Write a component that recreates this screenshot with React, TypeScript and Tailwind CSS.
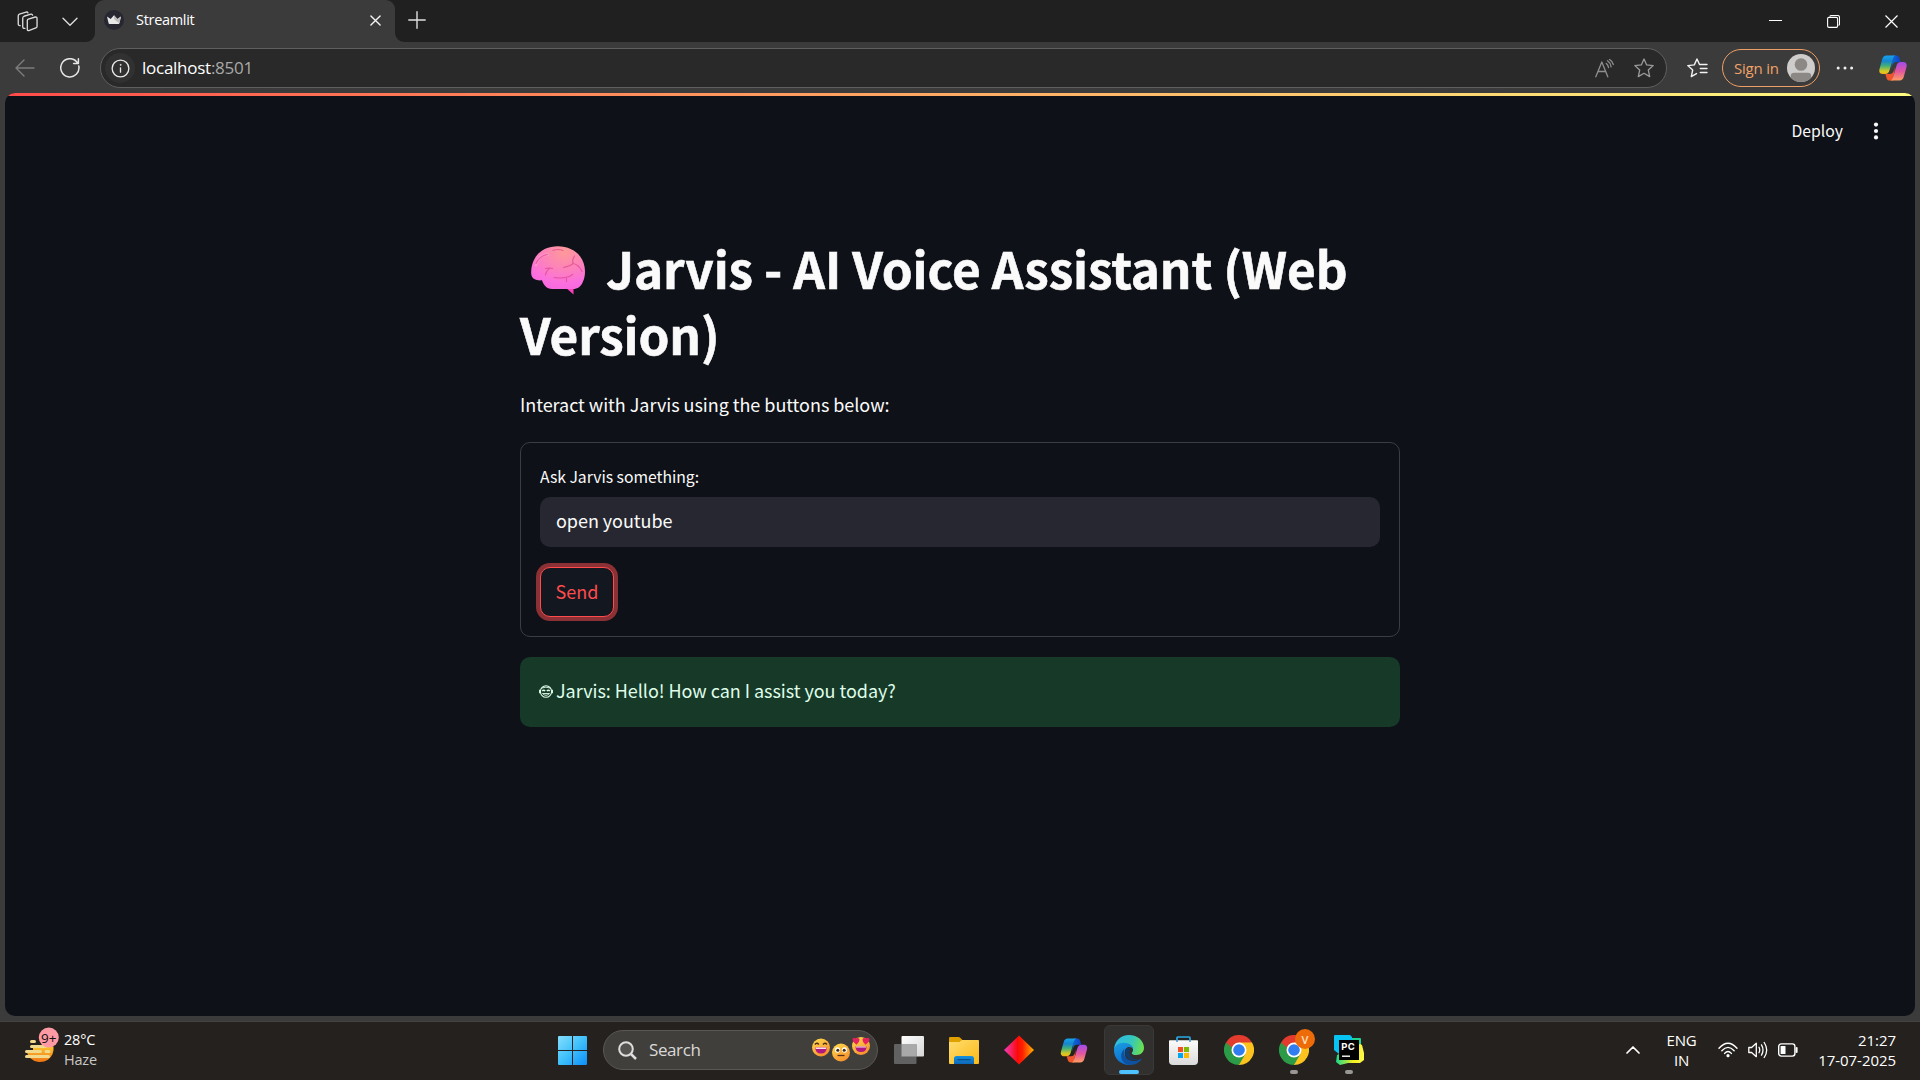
import React from "react";

function CopilotLogo({ id, className }: { id: string; className: string }) {
  return (
    <svg viewBox="0 0 28 26" className={className}>
      <defs>
        <linearGradient id={id + "a"} x1="0" y1="0" x2="0" y2="1">
          <stop offset="0" stopColor="#16a4ee" />
          <stop offset=".3" stopColor="#1685cf" />
          <stop offset=".55" stopColor="#3fae7c" />
          <stop offset=".85" stopColor="#d5cb20" />
          <stop offset="1" stopColor="#f6b21b" />
        </linearGradient>
        <linearGradient id={id + "b"} x1="0" y1="0" x2="0" y2="1">
          <stop offset="0" stopColor="#a14bea" />
          <stop offset=".5" stopColor="#e2569f" />
          <stop offset="1" stopColor="#ff9d62" />
        </linearGradient>
        <linearGradient id={id + "c"} x1="0" y1="0" x2="1" y2="0">
          <stop offset="0" stopColor="#0c6fd8" />
          <stop offset="1" stopColor="#123fc4" />
        </linearGradient>
      </defs>
      <path d="M14 .5h3.200c2 0 2.800 1 3.300 2.600L21.600 7H17c-2 0-3.200 1.300-3.800 3.200L12 14z" fill={`url(#${id}c)`} />
      <path d="M14 25.500h-3.200c-2 0-2.800-1-3.300-2.600L6.400 19H11c2 0 3.200-1.300 3.800-3.200L16 12z" fill="#f0562b" />
      <path d="M7.500.5H17c-1.500 0-2.300 1-2.900 2.700L10.600 15c-.8 2.600-2 4-4.300 4H4c-3 0-4.300-1.800-3.500-5L3.200 4.300C4 1.700 5.200.5 7.500.5z" fill={`url(#${id}a)`} />
      <path d="M20.500 25.500H11c1.500 0 2.300-1 2.900-2.700L17.400 11c.8-2.600 2-4 4.300-4H24c3 0 4.300 1.800 3.500 5l-2.700 9.700c-.8 2.600-2 3.800-4.300 3.800z" fill={`url(#${id}b)`} />
    </svg>
  );
}

function ChromeLogo() {
  return (
    <svg viewBox="0 0 48 48" className="size-[30px]">
      <path d="M24 24 L3.200 12 A24 24 0 0 1 44.800 12 Z" fill="#e33b2e" />
      <path d="M24 24 L44.800 12 A24 24 0 0 1 24 48 Z" fill="#fcc31e" />
      <path d="M24 24 L24 48 A24 24 0 0 1 3.200 12 Z" fill="#2c9b48" />
      <path d="M24 12h20.800L34 24z" fill="#fcc31e" />
      <path d="M3.200 12 13.600 30 24 24 24 12z" fill="#e33b2e" />
      <path d="M3.200 12 13.600 30 20 26z" fill="#2c9b48" />
      <path d="M34.400 30 24 48l-2-14z" fill="#2c9b48" />
      <circle cx="24" cy="24" r="12" fill="#fff" />
      <circle cx="24" cy="24" r="9.300" fill="#2f7df0" />
    </svg>
  );
}

function TabStrip() {
  return (
    <div className="flex h-[42px] bg-[#202020]">
      <div className="flex w-[95px] items-start">
        <svg viewBox="0 0 22 22" className="ml-[17px] mt-[11px] size-[21px]" fill="none" stroke="#dcdcdc" strokeWidth="1.400" strokeLinejoin="round" strokeLinecap="round">
          <path d="M11.800 8.400 19.200 6.300Q21 6 21 7.700V16Q21 17.400 19.800 17.800L13 20.300Q10.800 21 10.800 19V10Q10.800 8.800 11.800 8.400z" />
          <path d="M8.300 18.200Q6 18.500 6 16.500V7.500Q6 6 7.300 5.500L14.500 3.300Q16 3 16.300 4.300" />
          <path d="M3.300 15.300Q1.300 15.500 1.300 13.700V5Q1.300 3.800 2.500 3.300L9.500 1.200Q11 .8 11.500 2" />
        </svg>
        <svg viewBox="0 0 16 10" className="ml-6 mt-[17px] h-[10px] w-4" fill="none" stroke="#dcdcdc" strokeWidth="1.400" strokeLinecap="round" strokeLinejoin="round">
          <path d="M1 1.200l7 7 7-7" />
        </svg>
      </div>
      <div className="relative flex w-[300px] items-start rounded-t-[9px] bg-[#3b3b3b]">
        <svg viewBox="0 0 9 9" className="absolute -left-[9px] bottom-0 size-[9px]"><path d="M9 0v9H0a9 9 0 0 0 9-9z" fill="#3b3b3b" /></svg>
        <svg viewBox="0 0 9 9" className="absolute -right-[9px] bottom-0 size-[9px]"><path d="M0 0v9h9a9 9 0 0 1-9-9z" fill="#3b3b3b" /></svg>
        <svg viewBox="0 0 20 20" className="ml-[9px] mt-[10px] size-5">
          <circle cx="10" cy="10" r="10" fill="#262730" />
          <path d="M3 6.500 6.700 9 10 5.200 13.300 9 17 6.500 15.400 13.300Q15.200 14 14.500 14h-9Q4.800 14 4.600 13.300z" fill="#e8e8e8" />
          <path d="M10 5.200 13.300 9 17 6.500 15.400 13.300Q12 11 10 9z" fill="#bdbdbd" />
        </svg>
        <span className="ml-[12px] mt-[9px] text-[14.500px] leading-[22px] tracking-[-0.3px] text-white">Streamlit</span>
        <svg viewBox="0 0 12 12" className="ml-auto mr-[14px] mt-[15px] size-[11px]" stroke="#f4f4f4" strokeWidth="1.500" strokeLinecap="round"><path d="M1 1l10 10M11 1L1 11" /></svg>
      </div>
      <svg viewBox="0 0 18 18" className="ml-[13px] mt-[11px] size-[18px]" stroke="#e0e0e0" strokeWidth="1.400" strokeLinecap="round"><path d="M9 .8v16.400M.8 9h16.400" /></svg>
      <div className="ml-auto flex items-start">
        <svg viewBox="0 0 13 13" className="mr-[45px] mt-[14px] size-[13px]" stroke="#fff" strokeWidth="1"><path d="M0 6.500h13" /></svg>
        <svg viewBox="0 0 13 13" className="mr-[45px] mt-[15px] size-[13px]" fill="none" stroke="#fff" strokeWidth="1.100"><rect x=".6" y="2.400" width="10" height="10" rx="1.300" /><path d="M2.700 1.500Q3.200.5 4.300.5h6.200q2 0 2 2v6.500q0 1-.9 1.500" /></svg>
        <svg viewBox="0 0 13 13" className="mr-[22px] mt-[15px] size-[13px]" stroke="#fff" strokeWidth="1.200"><path d="M.5.5l12 12M12.500.5l-12 12" /></svg>
      </div>
    </div>
  );
}

function Toolbar() {
  return (
    <div className="flex h-[51px] items-center bg-[#3b3b3b] pt-[1px]">
      <svg viewBox="0 0 20 18" className="ml-[15px] h-[18px] w-5" fill="none" stroke="#7c7c7c" strokeWidth="1.400" strokeLinecap="round" strokeLinejoin="round"><path d="M19 9H1M9 1 1 9l8 8" /></svg>
      <svg viewBox="0 0 20 20" className="ml-[25px] size-[20px]" fill="none" stroke="#e6e6e6" strokeWidth="1.500" strokeLinecap="round" strokeLinejoin="round"><path d="M18.800 8A9.100 9.100 0 1 1 17.500 4.800M18.400.8v4.800h-4.800" /></svg>
      <div className="ml-[20px] flex h-10 w-[1567px] items-center rounded-full border border-[#5f5f5f] bg-[#292929]">
        <div className="ml-1 flex size-[30px] items-center justify-center rounded-full bg-[#313131]">
          <svg viewBox="0 0 20 20" className="size-[19px]" fill="none" stroke="#e8e8e8" strokeWidth="1.400" strokeLinecap="round"><circle cx="10" cy="10" r="8.800" /><path d="M10 9.300v4.600" /><circle cx="10" cy="6.200" r=".5" fill="#e8e8e8" strokeWidth=".8" /></svg>
        </div>
        <span className="ml-[7px] text-[17px] leading-6 tracking-[-0.26px] text-white">localhost<span className="text-[#a8a8a8]">:8501</span></span>
        <svg viewBox="0 0 19 19" className="ml-auto mr-[20px] size-[19px]" fill="none" stroke="#8f8f8f" strokeWidth="1.300" strokeLinecap="round" strokeLinejoin="round"><path d="M.8 17.800 6.800 3l6 14.800M3 12.500h7.700M11.300 4.500q1.800 1.300 2.200 4M12.500 1.800q2.900 1.900 3.600 6M14.500.5q2.900 1.600 3.800 5" /></svg>
        <svg viewBox="0 0 20 20" className="mr-[12px] size-[20px]" fill="none" stroke="#9a9a9a" strokeWidth="1.300" strokeLinejoin="round"><path d="M10 1 12.700 6.900 19.200 7.600 14.300 12 15.700 18.600 10 15.300 4.300 18.600 5.700 12 .8 7.600 7.300 6.900z" /></svg>
      </div>
      <svg viewBox="0 0 21 20" className="ml-[20px] h-5 w-[21px]" fill="none" stroke="#f2f2f2" strokeWidth="1.400" strokeLinejoin="round" strokeLinecap="round"><path d="M12.500 6.500 10 1 7.300 6.900.8 7.600 5.700 12 4.300 18.600 9.500 15.600M12.500 6.500h7.500M13.300 10.500h6.700M13.300 14.500h6.700" /></svg>
      <div className="-mt-px ml-[14px] flex h-[38px] w-[98px] items-center rounded-full border-[1.500px] border-[#ee9f65]">
        <span className="ml-[11px] whitespace-nowrap text-[15px] leading-5 tracking-[-0.2px] text-[#f0a269]">Sign in</span>
        <svg viewBox="0 0 28 28" className="ml-auto mr-[4px] size-7"><defs><clipPath id="av"><circle cx="14" cy="14" r="14" /></clipPath></defs><circle cx="14" cy="14" r="14" fill="#cfcdcb" /><g clipPath="url(#av)" fill="#8b8886"><circle cx="14" cy="10.500" r="6.300" /><path d="M3.800 21.500Q4 18.800 7 18.800h14q3 0 3.200 2.700V28H3.800z" /></g></svg>
      </div>
      <svg viewBox="0 0 18 4" className="ml-[16px] h-1 w-[18px]" fill="#f0f0f0"><circle cx="2.200" cy="2" r="1.500" /><circle cx="9" cy="2" r="1.500" /><circle cx="15.600" cy="2" r="1.500" /></svg>
      <CopilotLogo id="ct" className="ml-[25px] h-[26px] w-[28px]" />
    </div>
  );
}

function Brain() {
  return (
    <svg viewBox="0 0 54 49" className="ml-[11px] mr-[21px] mt-[11px] h-[49px] w-[54px]" fill="none">
      <defs>
        <radialGradient id="bg1" cx=".62" cy=".12" r=".95">
          <stop offset="0" stopColor="#ff9a98" />
          <stop offset=".45" stopColor="#fc82bb" />
          <stop offset=".8" stopColor="#fb6ee0" />
          <stop offset="1" stopColor="#f567dc" />
        </radialGradient>
      </defs>
      <path d="M34 41l8.500 7.500V41z" fill="#fb3fbd" />
      <path d="M27 .3C16 .2 7 5.500 3.200 13.500.5 18.500-.3 25 .4 29c.8 4 4.600 5.800 10.600 5.300 1.500 4.500 4.500 8.700 10 8.700h21c4.500 0 8.300-2.500 10-7.500 2-4 2.500-9.500 1.500-15C51.500 8.500 41 .5 27 .3z" fill="url(#bg1)" />
      <path d="M5 19C7 11 12 8.500 17 8.500" stroke="#ffa6cf" strokeWidth="3" strokeLinecap="round" opacity=".5" />
      <g stroke="#e0478f" strokeWidth="1.200" strokeLinecap="round" strokeLinejoin="round" opacity=".7">
        <path d="M5 17.500Q8 10 16.500 8.500" />
        <path d="M22 4.500q5-2 10 0" />
        <path d="M14.500 22.500q3-1 7 0M19 22q-4 3-4.500 7" />
        <path d="M23 31.500q7 1 11 0 5-.5 7.500-3M35 31.500q1 2 .5 4" />
        <path d="M32.500 21.500q7-1.500 9.500-4 6 1 9 8M42 17.500q-1-4 1.500-7.500" />
      </g>
    </svg>
  );
}

function Page() {
  return (
    <div className="flex h-[928px] bg-[#3b3b3b] px-[5px] pb-[5px]">
      <main className="w-[1910px] overflow-hidden rounded-[10px] bg-[#0e1117] font-['Noto_Sans_CJK_SC',sans-serif] text-[#fafafa]">
        <div className="h-[3px] bg-linear-to-r from-[#ff4b4b] to-[#fffd80]" />
        <header className="flex h-[70px] items-center justify-end">
          <span className="text-[15.750px] leading-6">Deploy</span>
          <svg viewBox="0 0 6 18" className="ml-[30px] mr-[36px] h-[18px] w-[6px]" fill="#fafafa"><circle cx="3" cy="2.600" r="2.100" /><circle cx="3" cy="9" r="2.100" /><circle cx="3" cy="15.400" r="2.100" /></svg>
        </header>
        <section className="ml-[515px] mt-[69px] w-[880px]">
          <h1 className="text-[49.500px] font-bold leading-[66px] tracking-[-0.13px] [-webkit-text-stroke:0.6px_#fafafa]">
            <span className="flex items-start whitespace-nowrap"><Brain />Jarvis - AI Voice Assistant (Web</span>
            <span className="block">Version)</span>
          </h1>
          <p className="mt-[21px] text-[18px] leading-[32px] tracking-[-0.04px]">Interact with Jarvis using the buttons below:</p>
          <form className="mt-[22px] flex h-[195px] flex-col items-start rounded-[10px] border border-[#3b3d42] px-[19px]">
            <label className="mt-[19px] text-[15.750px] leading-[30px] tracking-[-0.03px]">Ask Jarvis something:</label>
            <div className="mt-[5px] flex h-[50px] w-[840px] items-center rounded-[10px] bg-[#262730] pl-4 text-[18px] leading-7 tracking-[-0.04px]">
              <span className="-mt-[4px]">open youtube</span>
            </div>
            <button type="button" className="mt-[20px] flex h-[50px] w-[74px] items-center justify-center rounded-[10px] border border-[#ff4b4b] bg-[#131720] text-[18px] leading-7 text-[#ff4b4b] shadow-[0_0_0_4px_#8b3034]">
              <span className="-mt-[3px]">Send</span>
            </button>
          </form>
          <div className="mt-[20px] flex h-[70px] items-center rounded-[10px] bg-[#173928] pl-[19px] text-[18px] text-[#dffde9]">
            <svg viewBox="0 0 14 13" className="-mt-[2px] mr-[3px] h-[13px] w-[14px]" fill="none" stroke="#dffde9" strokeWidth="1.100">
              <ellipse cx="7" cy="6.500" rx="5.600" ry="5.800" />
              <path d="M.7 4.700v3.600M13.300 4.700v3.600" strokeWidth="1.300" />
              <path d="M3 3q4-1.800 8 0M3.500 8.500q3.500 3.600 7 0z" strokeWidth=".9" />
              <path d="M3.200 5.800q1.500-1.200 3 0M7.800 5.800q1.500-1.200 3 0" strokeWidth="1.500" />
            </svg>
            <span className="-mt-[5px] leading-7 tracking-[-0.04px]">Jarvis: Hello! How can I assist you today?</span>
          </div>
        </section>
      </main>
    </div>
  );
}

function SearchFaces() {
  return (
    <svg viewBox="0 0 60 26" className="h-[26px] w-[60px]">
      <defs>
        <linearGradient id="fc" x1=".2" y1="0" x2=".8" y2="1"><stop offset="0" stopColor="#ffd84a" /><stop offset="1" stopColor="#f58a2c" /></linearGradient>
      </defs>
      <circle cx="10" cy="10.500" r="9" fill="url(#fc)" />
      <path d="M3.800 7.500q1.900-2.500 4 0M12 7.500q1.900-2.500 4 0" stroke="#4a2b20" strokeWidth="1.300" fill="none" />
      <path d="M4.300 10.500h11.400q0 6-5.700 6t-5.700-6z" fill="#b0187f" /><path d="M4.800 10.500h10.400v1.500H4.800z" fill="#f6dff0" />
      <circle cx="30" cy="15.500" r="9" fill="url(#fc)" />
      <ellipse cx="26.500" cy="13" rx="2.500" ry="2.800" fill="#fff" /><ellipse cx="33.500" cy="13" rx="2.500" ry="2.800" fill="#fff" />
      <circle cx="26.800" cy="13.200" r="1.500" fill="#40261d" /><circle cx="33.200" cy="13.200" r="1.500" fill="#40261d" />
      <path d="M26.500 18.500h7" stroke="#5a2b1a" strokeWidth="1.300" />
      <circle cx="50" cy="9" r="9" fill="url(#fc)" />
      <path d="M45.500 7.800Q41 4.500 41.600 2q1.400-2.500 3.400-.4 2.400-1.500 3.500.7.400 2.700-3 5.500zM54.500 7.800q-3.400-2.800-3-5.500 1.100-2.200 3.500-.7 2-2.100 3.400.4.600 2.500-3.900 5.800z" fill="#e6215f" />
      <path d="M44.500 9.500h11q0 5.500-5.500 5.500t-5.500-5.500z" fill="#b0187f" /><path d="M45 9.500h10v1H45z" fill="#f6dff0" />
    </svg>
  );
}

function Slot({ children, mark }: { children: React.ReactNode; mark?: "active" | "open" }) {
  return (
    <div className="relative flex h-[50px] w-[55px] items-center justify-center">
      {mark === "active" && <div className="absolute left-[2.500px] top-0 h-[50px] w-[50px] rounded-[6px] border border-[#3a3938] bg-[#32302f]" />}
      <div className="relative">{children}</div>
      {mark === "active" && <div className="absolute bottom-[1px] h-1 w-5 rounded-full bg-[#4cc2ff]" />}
      {mark === "open" && <div className="absolute bottom-[1px] h-1 w-2 rounded-full bg-[#989796]" />}
    </div>
  );
}

function Taskbar() {
  return (
    <div className="flex h-[59px] border-t border-[#44433f] bg-[#24211e] text-white">
      <div className="flex w-[558px] items-start">
        <svg viewBox="0 0 36 38" className="ml-[24px] mt-[5px] h-[38px] w-[36px] overflow-visible">
          <defs><linearGradient id="wx" x1="0" y1="0" x2="0" y2="1"><stop offset="0" stopColor="#fdc62f" /><stop offset="1" stopColor="#ee7314" /></linearGradient></defs>
          <path d="M3 19.500H29.500A14.500 14.500 0 0 1 24 32.700 14.500 14.500 0 0 1 6 31 14 14 0 0 1 3 19.500z" fill="url(#wx)" />
          <path d="M0 16h9v7H0z" fill="#24211e" />
          <g stroke="#f2d98c" strokeWidth="3" strokeLinecap="round"><path d="M7.500 14.500h3M7.500 19.500h14M2.500 24.500h14M22 24.500h3M2.500 29.500h22" /></g>
          <circle cx="24.800" cy="10.500" r="10" fill="#ff99a4" />
          <text x="24.800" y="15.500" textAnchor="middle" fontSize="13.500" fill="#111" fontFamily="Open Sans">9+</text>
        </svg>
        <div className="ml-1 mt-[8px] flex flex-col text-[14.500px] leading-[20px] tracking-[-0.2px]">
          <span>28°C</span>
          <span className="text-[#c8c7c6]">Haze</span>
        </div>
      </div>
      <div className="flex h-[56px] items-center">
        <svg viewBox="0 0 29 29" className="size-[29px]"><defs><linearGradient id="wl" x1="0" y1="0" x2="1" y2="1"><stop offset="0" stopColor="#85dffc" /><stop offset=".5" stopColor="#3fc0fb" /><stop offset="1" stopColor="#0d8ff8" /></linearGradient></defs><path d="M1 0h13v14H0V1q0-1 1-1zM15 0h13q1 0 1 1v13H15zM0 15h14v14H1q-1 0-1-1zM15 15h14v13q0 1-1 1H15z" fill="url(#wl)" /></svg>
        <div className="ml-4 flex h-10 w-[275px] items-center rounded-full border border-[#5a5854] bg-[#413f3b]">
          <svg viewBox="0 0 19 19" className="ml-[14px] size-[19px]" fill="#55534f" stroke="#dedede" strokeWidth="2"><circle cx="8" cy="8" r="6.800" /><path d="M13 13l5 5" strokeWidth="2.500" /></svg>
          <span className="ml-[12px] text-[17px] leading-6 tracking-[-0.4px] text-[#dad9d8]">Search</span>
          <div className="ml-auto mr-[6px]"><SearchFaces /></div>
        </div>
        <div className="ml-[3.500px] flex">
          <Slot>
            <svg viewBox="0 0 30 28" className="h-7 w-[30px]"><defs><linearGradient id="tv" x1="0" y1="0" x2="1" y2="1"><stop offset="0" stopColor="#fff" /><stop offset="1" stopColor="#d6d6d6" /></linearGradient></defs><rect x="7.500" y="0" width="22.500" height="20.500" rx="1" fill="url(#tv)" /><rect x="0" y="8" width="22.500" height="20" rx="1" fill="#616161" /><path d="M7.500 8h15v12.500h-15z" fill="#a9a9a9" /></svg>
          </Slot>
          <Slot>
            <svg viewBox="0 0 30 27" className="mt-[1px] h-[27px] w-[30px]"><defs><linearGradient id="fo" x1="0" y1="0" x2="1" y2="1"><stop offset="0" stopColor="#ffdd70" /><stop offset="1" stopColor="#fbb916" /></linearGradient><linearGradient id="fb" x1="0" y1="0" x2="0" y2="1"><stop offset="0" stopColor="#1491df" /><stop offset="1" stopColor="#0d68b8" /></linearGradient></defs><path d="M0 1.200Q0 0 1.200 0h8.300q1 0 1.700.8L13.500 3H28q2 0 2 2v3H0z" fill="#dfa000" /><path d="M0 5h10.500L13 3h16q1 0 1 1v22q0 1-1 1H1q-1 0-1-1z" fill="url(#fo)" /><path d="M5 27v-5.500Q5 19 7.500 19h15q2.500 0 2.500 2.500V27z" fill="url(#fb)" /><path d="M8.500 22.700h13" stroke="#0b4c88" strokeWidth="1.200" /></svg>
          </Slot>
          <Slot>
            <svg viewBox="0 0 30 30" className="size-[30px]"><defs><linearGradient id="dm" x1="0" y1="0" x2="1" y2="0"><stop offset="0" stopColor="#f23cc0" /><stop offset=".45" stopColor="#fa0a0a" /><stop offset=".62" stopColor="#ff2200" /><stop offset="1" stopColor="#ffb400" /></linearGradient></defs><path d="M15 .5 30 15 15 29.500 0 15z" fill="url(#dm)" /></svg>
          </Slot>
          <Slot><CopilotLogo id="cb" className="h-[25px] w-[28px]" /></Slot>
          <Slot mark="active">
            <svg viewBox="0 0 48 48" className="size-[30px]">
              <defs>
                <linearGradient id="e1" x1="0" y1=".3" x2="1" y2=".5"><stop offset="0" stopColor="#2dbbe8" /><stop offset=".55" stopColor="#34c6c0" /><stop offset="1" stopColor="#6be04e" /></linearGradient>
                <linearGradient id="e2" x1="0" y1="0" x2=".4" y2="1"><stop offset="0" stopColor="#1b9de2" /><stop offset="1" stopColor="#0a6fd0" /></linearGradient>
              </defs>
              <path d="M0 23C1 9 11 0 24 0c14 0 24 9.500 24 20.500C48 28 42.500 32 36 32c-5 0-7.500-1.600-7.500-3 0-1.200 2-2.300 2-5.500C30.500 18 25 14 17.500 14 8 14 2 19 0 23z" fill="url(#e1)" />
              <path d="M0 24c1-7 7.500-11.500 15-11.500 9 0 15.500 4.500 15.500 10.500-1.500-3-4-4-6.500-4-4 0-7 4-7 9.500C17 37 24 47 24 48 10.500 48-.5 37.500 0 24z" fill="url(#e2)" />
              <path d="M16.800 22C13 33 21 41.500 31 41.500c5 0 9-1.700 11.500-3.300 1-.5 1.800.3 1 1.300C39.500 45 32 48.500 24.500 48 14 47 8.500 35 13 27q1.500-3 3.800-5z" fill="#0d52a0" />
              <path d="M18 25c-1 8 5 15.500 16 15.500 4 0 7-1 9-2-4 2-13 .5-17-5-2.500-3.500-2.500-8 .5-11-4-3-8-1-8.500 2.500z" fill="#103d70" />
            </svg>
          </Slot>
          <Slot>
            <svg viewBox="0 0 29 29" className="mr-px size-[29px]"><defs><linearGradient id="st" x1="0" y1="0" x2="0" y2="1"><stop offset="0" stopColor="#fbfbfb" /><stop offset="1" stopColor="#dadada" /></linearGradient></defs><path d="M8 6V1.800Q8 1 8.800 1h11.400q.8 0 .8.800V6" fill="none" stroke="#29abe6" strokeWidth="1.700" /><path d="M0 5q0-.8.800-.8h27.400q.8 0 .8.800v20q0 4-4 4H4q-4 0-4-4z" fill="url(#st)" /><path d="M8 4.200v1.500M21 4.200v1.500" stroke="#1b87c4" strokeWidth="1.700" /><path d="M9 11h5v5H9z" fill="#f25022" /><path d="M15 11h5v5h-5z" fill="#7fba00" /><path d="M9 17h5v5H9z" fill="#00a4ef" /><path d="M15 17h5v5h-5z" fill="#ffb900" /></svg>
          </Slot>
          <Slot><ChromeLogo /></Slot>
          <Slot mark="open">
            <ChromeLogo />
            <span className="absolute -right-[6px] -top-[6px] flex size-5 items-center justify-center rounded-full bg-[#ed6c09] text-[11px] font-semibold leading-none text-[#ffe0c4]">V</span>
          </Slot>
          <Slot mark="open">
            <svg viewBox="0 0 30 30" className="size-[30px]"><defs><linearGradient id="pc" x1="0" y1="0" x2="1" y2="0"><stop offset="0" stopColor="#18d68c" /><stop offset=".35" stopColor="#8fe650" /><stop offset=".6" stopColor="#f3ee1c" /><stop offset="1" stopColor="#fcf84a" /></linearGradient></defs><path d="M18 3h8q1 0 1 1v6h-9z" fill="#1fd494" /><path d="M1 0h15l2 2v17H5l-5-4V1q0-1 1-1z" fill="#07c3f2" /><path d="M3 20 26 9l2 1 2 8v7l-4 3H14l-8 2-4-3z" fill="url(#pc)" /><path d="M5 5h20v20H5z" fill="#000" /><path d="M8 21.200h8" stroke="#fff" strokeWidth="1.400" /><text x="7.200" y="14.900" fontSize="9.500" fontWeight="700" fill="#fff" fontFamily="Inter" textLength="13.500">PC</text></svg>
          </Slot>
        </div>
      </div>
      <div className="ml-auto flex h-[56px] items-center">
        <svg viewBox="0 0 14 8" className="mr-[27px] h-2 w-[14px]" fill="none" stroke="#fff" strokeWidth="1.700" strokeLinecap="round" strokeLinejoin="round"><path d="M1 7l6-6 6 6" /></svg>
        <div className="mr-[22px] flex w-[29px] flex-col items-center text-[15px] leading-5 tracking-[-0.2px]"><span>ENG</span><span>IN</span></div>
        <svg viewBox="0 0 20 16" className="mr-[10px] h-4 w-5" fill="none" stroke="#fff" strokeWidth="1.400" strokeLinecap="round"><path d="M1 6.200Q10-3.800 19 6.200M3.800 8.800q6.200-6.800 12.400 0M6.600 11.400q3.400-3.800 6.800 0" /><circle cx="10" cy="13.700" r="1.600" fill="#fff" stroke="none" /></svg>
        <svg viewBox="0 0 20 18" className="mr-[10px] h-[18px] w-5" fill="none" stroke="#fff" strokeWidth="1.300" strokeLinecap="round" strokeLinejoin="round"><path d="M.8 6.500h2.800L8.300 2.300v13.400L3.600 11.500H.8zM11 6.300q1.500 2.700 0 5.400M13.500 3.900q3 5.100 0 10.200M16.200 1.500q5 7.500 0 15" /></svg>
        <svg viewBox="0 0 20 14" className="mr-[20px] h-[14px] w-5" fill="none" stroke="#fff" strokeWidth="1.400"><rect x=".7" y=".9" width="16.200" height="12.200" rx="2.500" /><rect x="2.600" y="3" width="4.900" height="8" rx=".6" fill="#fff" stroke="none" /><path d="M18.600 5v4" strokeWidth="2" strokeLinecap="round" /></svg>
        <div className="mr-[24px] flex w-[78px] flex-col items-end whitespace-nowrap text-[15px] leading-5 tracking-[-0.05px]"><span>21:27</span><span>17-07-2025</span></div>
      </div>
    </div>
  );
}

export default function App() {
  return (
    <div className="flex h-[1080px] w-[1920px] flex-col overflow-hidden bg-[#3b3b3b] font-['Open_Sans','Noto_Sans',sans-serif]">
      <TabStrip />
      <Toolbar />
      <Page />
      <Taskbar />
    </div>
  );
}
